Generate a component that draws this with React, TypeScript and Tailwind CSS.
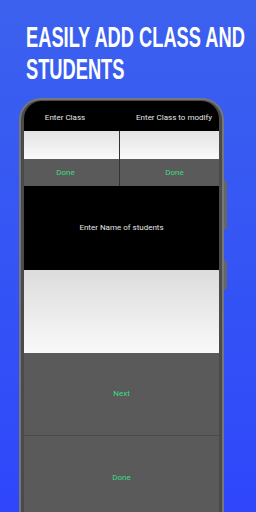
import React from 'react'

function Heading() {
  const line = 'block origin-left scale-x-[0.63] whitespace-nowrap'
  return (
    <h1
      className="pl-[26px] pt-[21px] text-[29px] leading-[32px] font-bold text-white"
      style={{ fontFamily: '"Liberation Sans", Arial, sans-serif' }}
    >
      <span className={line}>EASILY ADD CLASS AND</span>
      <span className={line}>STUDENTS</span>
    </h1>
  )
}

export default function App() {
  return (
    <div
      className="relative w-[256px] h-[512px] overflow-hidden bg-gradient-to-b from-[#3c61ee] to-[#2f46fb]"
      style={{ fontFamily: 'Roboto, "Liberation Sans", sans-serif' }}
    >
      <Heading />

      <div className="relative ml-[19px] mt-[13px] w-[205px] h-[420px] rounded-t-[22px] bg-[#777] p-[2px]">
        <div className="h-full rounded-t-[20px] bg-[#4a4a4a] px-[3px] pt-[1px]">
          <div className="flex flex-col h-full rounded-t-[18px] overflow-hidden bg-black text-[8px]">
            <div className="flex h-[30px] items-center text-[#e6e6e6] pt-[4px]">
              <div className="w-[96px] text-center pr-[14px]">Enter Class</div>
              <div className="flex-1 text-right pr-[7px]">Enter Class to modify</div>
            </div>
            <div className="flex h-[28px]">
              <div className="w-[96px] bg-gradient-to-b from-[#e2e2e2] to-[#fafafa] border-r border-[#333]" />
              <div className="flex-1 bg-gradient-to-b from-[#e2e2e2] to-[#fafafa]" />
            </div>
            <div className="flex h-[27px] bg-[#5a5a5a] text-[#3ddc84]">
              <div className="w-[96px] flex items-center justify-center border-r border-[#333] pr-[12px]">Done</div>
              <div className="flex-1 flex items-center justify-center pl-[10px]">Done</div>
            </div>
            <div className="flex h-[84px] items-center justify-center text-[#e6e6e6]">Enter Name of students</div>
            <div className="h-[83px] bg-gradient-to-b from-[#dcdcdc] to-[#f9f9f9]" />
            <div className="flex h-[83px] items-center justify-center bg-[#5a5a5a] text-[#3ddc84] border-b border-[#4a4a4a]">Next</div>
            <div className="flex flex-1 items-start justify-center pt-[36px] bg-[#5a5a5a] text-[#3ddc84]">Done</div>
          </div>
        </div>
        <div className="absolute right-[-3px] top-[82px] w-[3px] h-[50px] rounded-r bg-[#666]" />
        <div className="absolute right-[-3px] top-[162px] w-[3px] h-[30px] rounded-r bg-[#666]" />
      </div>
    </div>
  )
}
